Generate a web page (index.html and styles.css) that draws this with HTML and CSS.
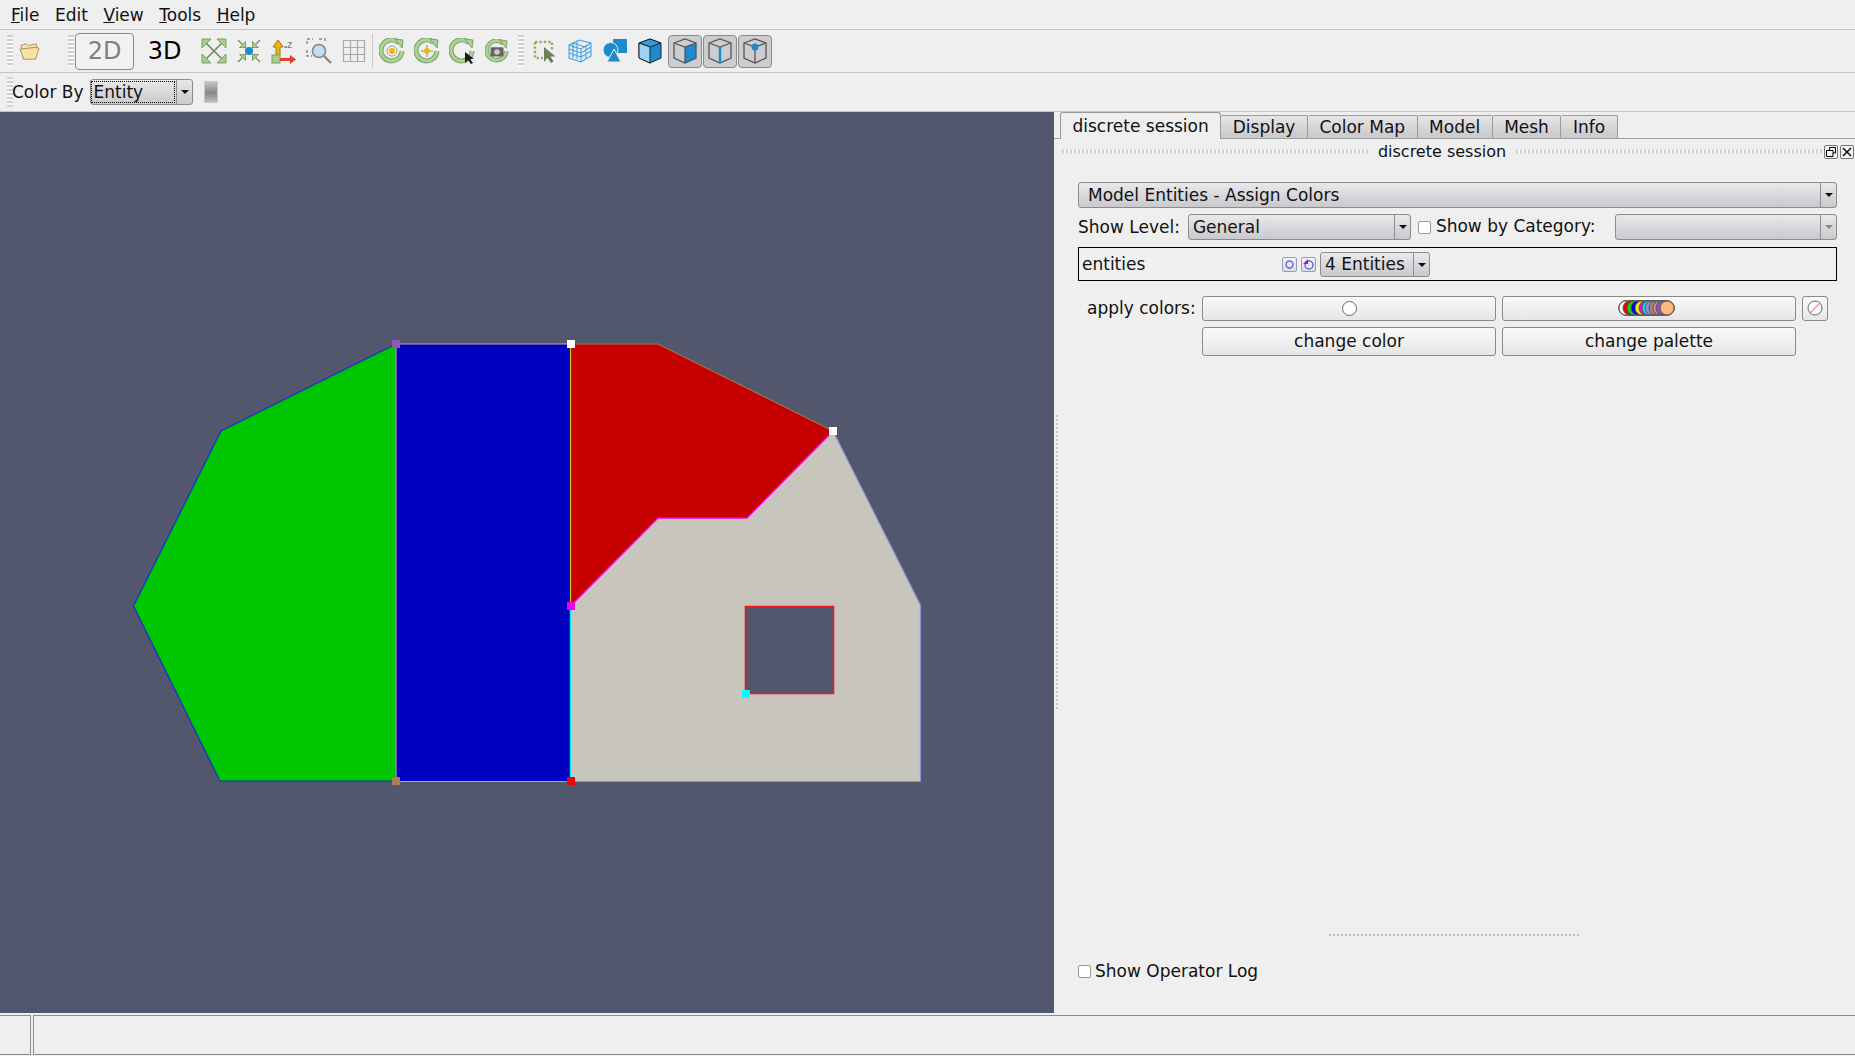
FILE: index.html
```html
<!DOCTYPE html>
<html>
<head>
    <meta charset="UTF-8">
    <meta name="viewport" content="width=device-width, initial-scale=1.0">
    <title>discrete session</title>
    <link rel="stylesheet" href="styles.css">
</head>
<body>
    <div id="menubar">
        <span><u>F</u>ile</span>
        <span>Edit</span>
        <span><u>V</u>iew</span>
        <span><u>T</u>ools</span>
        <span><u>H</u>elp</span>
    </div>

    <div id="toolbar">
        <div class="grip first"></div>
        <div class="tool open">
            <svg width="22" height="20" viewBox="0 0 24 22"><path d="M2 5l6-2 2 2 9-2 1 5L5 20z" fill="#f3dfb0" stroke="#a89468"/><path d="M1 9l17-2 4 1-4 12H5z" fill="#f6e3a8" stroke="#a08a58"/></svg>
        </div>
        <div class="grip second"></div>
        <button class="view-btn on">2D</button>
        <button class="view-btn">3D</button>
        <div class="tool">
            <svg width="26" height="26" viewBox="0 0 26 26"><path d="M4 4l18 18M22 4L4 22" stroke="#6d8a5c" stroke-width="1.6"/><path d="M1 1h9L1 10zM25 1h-9l9 9zM1 25h9L1 16zM25 25h-9l9-9z" fill="#a5cf8c" stroke="#7f9f6c"/></svg>
        </div>
        <div class="tool">
            <svg width="26" height="26" viewBox="0 0 26 26"><path d="M2 2l22 22M24 2L2 24" stroke="#6d8a5c" stroke-width="1.2"/><path d="M9.500 9.500H3.500l6-6zM16.500 9.500h6l-6-6zM9.500 16.500H3.500l6 6zM16.500 16.500h6l-6 6z" fill="#a5cf8c" stroke="#7f9f6c"/><circle cx="13" cy="13" r="4" fill="#1c8acc"/></svg>
        </div>
        <div class="tool">
            <svg width="26" height="26" viewBox="0 0 26 26"><path d="M7 2l5 7H9v9H5V9H2z" fill="#f2b705" stroke="#9a7a10"/><rect x="1" y="17" width="8" height="8" fill="#a5cf8c" stroke="#7f9f6c"/><path d="M9 20h10v-3l6 4.500-6 4.500v-3H9z" fill="#e0402c"/><path d="M13 9h3" stroke="#777" stroke-width="1.400"/><text x="16" y="10" class="axis-label">z</text></svg>
        </div>
        <div class="tool">
            <svg width="26" height="26" viewBox="0 0 26 26"><path d="M1 6V1h6M13 1h6v4M1 12v6h5" fill="none" stroke="#888" stroke-width="1.400" stroke-dasharray="3 2"/><circle cx="13" cy="13" r="6.500" fill="#bfe0f5" stroke="#888" stroke-width="1.600"/><path d="M18 18l7 7" stroke="#888" stroke-width="2.400"/></svg>
        </div>
        <div class="tool">
            <svg width="24" height="24" viewBox="0 0 24 24"><path d="M1.500 1.500h21v21h-21zM8.500 1.500v21M15.500 1.500v21M1.500 8.500h21M1.500 15.500h21" fill="none" stroke="#a8a8a8" stroke-width="1.200"/></svg>
        </div>
        <div class="divider"></div>
        <div class="tool">
            <svg width="26" height="26" viewBox="0 0 26 26"><path d="M20 5a10.500 10.500 0 1 0 3 8" fill="none" stroke="#7f9f6c" stroke-width="5"/><path d="M20 5a10.500 10.500 0 1 0 3 8" fill="none" stroke="#a9d492" stroke-width="3"/><path d="M16 1l8 1-1 8z" fill="#a9d492" stroke="#7f9f6c"/><circle cx="13" cy="13" r="5" fill="#f4f4f4" stroke="#999"/><circle cx="13" cy="13" r="3" fill="#f2b705"/></svg>
        </div>
        <div class="tool">
            <svg width="26" height="26" viewBox="0 0 26 26"><path d="M20 5a10.500 10.500 0 1 0 3 8" fill="none" stroke="#7f9f6c" stroke-width="5"/><path d="M20 5a10.500 10.500 0 1 0 3 8" fill="none" stroke="#a9d492" stroke-width="3"/><path d="M16 1l8 1-1 8z" fill="#a9d492" stroke="#7f9f6c"/><path d="M13 7v12M7 13h12" stroke="#888"/><circle cx="13" cy="13" r="3" fill="#f2b705"/></svg>
        </div>
        <div class="tool">
            <svg width="26" height="26" viewBox="0 0 26 26"><path d="M20 5a10.500 10.500 0 1 0 3 8" fill="none" stroke="#7f9f6c" stroke-width="5"/><path d="M20 5a10.500 10.500 0 1 0 3 8" fill="none" stroke="#a9d492" stroke-width="3"/><path d="M16 1l8 1-1 8z" fill="#a9d492" stroke="#7f9f6c"/><path d="M16 14v11l3-3 3 4 2-1-3-4h4z" fill="#1a1a1a"/></svg>
        </div>
        <div class="tool">
            <svg width="24" height="24" viewBox="0 0 26 26"><path d="M20 5a10.500 10.500 0 1 0 3 8" fill="none" stroke="#7f9f6c" stroke-width="5"/><path d="M20 5a10.500 10.500 0 1 0 3 8" fill="none" stroke="#a9d492" stroke-width="3"/><path d="M16 1l8 1-1 8z" fill="#a9d492" stroke="#7f9f6c"/><rect x="6" y="9" width="14" height="10" rx="1" fill="#666"/><circle cx="13" cy="14" r="3" fill="#ccc"/></svg>
        </div>
        <div class="grip third"></div>
        <div class="tool">
            <svg width="26" height="26" viewBox="0 0 26 26"><path d="M3 4h17v9M3 4v16h8" fill="none" stroke="#8cb35c" stroke-width="2.400" stroke-dasharray="2.400 2"/><path d="M12 9v15l3.500-4 3.500 5 2.500-1.500-3-5h5z" fill="#6f7f5c"/></svg>
        </div>
        <div class="tool">
            <svg width="26" height="26" viewBox="0 0 26 26"><path d="M2 7l10-5 12 3v13l-10 6-12-4zM2 7l12 4 10-6M14 11v13M2 11l12 4 10-6M2 15l12 4 10-6M6 5l12 4M6 5v15M10 3.500v17.500M19 7v14" fill="#d9eefb" stroke="#4f9fd8" stroke-width="1.100"/></svg>
        </div>
        <div class="tool">
            <svg width="26" height="26" viewBox="0 0 26 26"><rect x="11" y="1" width="14" height="14" fill="#1c8acc"/><circle cx="8.500" cy="12" r="7.500" fill="#1c8acc" stroke="#eee"/><path d="M12 11l7 13H5z" fill="#1c8acc" stroke="#eee"/></svg>
        </div>
        <div class="tool">
            <svg width="24" height="26" viewBox="0 0 24 26"><path d="M1 5l11-4 11 4v15l-11 5-11-5z" fill="#1c8acc" stroke="#223"/><path d="M1 5l11 4 11-4-11-4z" fill="#2f9ede" stroke="#223"/><path d="M1 5l11 4v16L1 20z" fill="#9dd3f2" stroke="#223"/></svg>
        </div>
        <button class="cube-btn">
            <svg width="24" height="26" viewBox="0 0 24 26"><path d="M12 9l11-4v15l-11 5z" fill="#1c8acc"/><path d="M1 5l11-4 11 4v15l-11 5-11-5zM1 5l11 4 11-4M12 9v16" fill="none" stroke="#555" stroke-width="1.300"/></svg>
        </button>
        <button class="cube-btn">
            <svg width="24" height="26" viewBox="0 0 24 26"><path d="M1 5l11-4 11 4v15l-11 5-11-5zM1 5l11 4 11-4M12 9v16" fill="none" stroke="#555" stroke-width="1.300"/><path d="M12 9v16" stroke="#1c8acc" stroke-width="2.400"/></svg>
        </button>
        <button class="cube-btn">
            <svg width="24" height="26" viewBox="0 0 24 26"><path d="M1 5l11-4 11 4v15l-11 5-11-5zM1 5l11 4 11-4M12 9v16" fill="none" stroke="#555" stroke-width="1.300"/><circle cx="12" cy="9" r="3.500" fill="#1c8acc"/></svg>
        </button>
    </div>

    <div id="colorbar">
        <div class="grip first"></div>
        <span class="colorby-label">Color By</span>
        <div class="combo focus"><span class="combo-text"><i>Entity</i></span><span class="arrow"></span></div>
        <div class="swatch"></div>
    </div>

    <div id="main">
        <div id="canvas">
            <svg width="1054" height="902" viewBox="0 112 1054 902">
                <polygon points="396,344 221,431 133.500,606 220,781 396,781" fill="#00c600" stroke="#1030d0" stroke-width="1.200"/>
                <polygon points="396,344 570.500,344 570.500,781 396,781" fill="#0000c0"/>
                <polygon points="570.500,344 658,344 833,431 747,518 658,518 570.500,606" fill="#c60000"/>
                <path fill-rule="evenodd" d="M570.500 606L658 518H747L833 431L920.500 605V781.500H570.500ZM745.500 606.500V693.500H833.500V606.500Z" fill="#c8c5bd"/>
                <path d="M745.500 606.500H833.500V693.500H745.500Z" fill="none" stroke="#f01818" stroke-width="1.600"/>
                <path d="M396 344V781" stroke="#c8a0c8" stroke-width="1.200"/>
                <path d="M396 344H570.500" stroke="#c8a8a8" stroke-width="1.200"/>
                <path d="M396 781.500H570.500" stroke="#a8a8e0" stroke-width="1.200"/>
                <path d="M570.500 344V606" stroke="#d8c400" stroke-width="1.200"/>
                <path d="M570.500 606V781" stroke="#00f0f0" stroke-width="1.500"/>
                <path d="M570.500 344H658L833 431" fill="none" stroke="#a87050" stroke-width="1.200"/>
                <path d="M570.500 606L658 518H747L833 431" fill="none" stroke="#f000f0" stroke-width="1.300"/>
                <path d="M833 431L920.500 605V781.500H570.500" fill="none" stroke="#8c8cdc" stroke-width="1.200"/>
                <rect x="392" y="340" width="8" height="8" fill="#8a5cb0"/>
                <rect x="392" y="777" width="8" height="8" fill="#a88050"/>
                <rect x="567" y="340" width="8" height="8" fill="#fff"/>
                <rect x="829" y="427" width="8" height="8" fill="#fff"/>
                <rect x="567" y="602" width="8" height="8" fill="#f000f0"/>
                <rect x="567" y="777" width="8" height="8" fill="#f00000"/>
                <rect x="742" y="690" width="8" height="8" fill="#00ffff"/>
            </svg>
        </div>

        <div id="dock">
            <div class="splitter"></div>
            <div class="tabs">
                <div class="tab active">discrete session</div>
                <div class="tab">Display</div>
                <div class="tab">Color Map</div>
                <div class="tab">Model</div>
                <div class="tab">Mesh</div>
                <div class="tab">Info</div>
            </div>
            <div class="dock-title">
                <div class="title-grip"></div>
                <span>discrete session</span>
                <div class="title-grip"></div>
                <div class="title-btn"><svg width="10" height="10" viewBox="0 0 10 10"><path d="M3.500 3V.5h6v5.500H7M.5 3.500h6.500v6H.5z" fill="none" stroke="#000"/></svg></div>
                <div class="title-btn"><svg width="10" height="10" viewBox="0 0 10 10"><path d="M1 1l8 8M9 1l-8 8" stroke="#000" stroke-width="1.400"/></svg></div>
            </div>

            <div class="panel">
                <div class="combo op-combo"><span class="combo-text">Model Entities - Assign Colors</span><span class="arrow"></span></div>

                <div class="level-row">
                    <span>Show Level:</span>
                    <div class="combo level-combo"><span class="combo-text">General</span><span class="arrow"></span></div>
                    <span class="check"></span>
                    <span class="category-label">Show by Category:</span>
                    <div class="combo category-combo disabled"><span class="combo-text"></span><span class="arrow"></span></div>
                </div>

                <div class="entity-box">
                    <span class="entity-name">entities</span>
                    <span class="mini-btn"><svg width="11" height="11" viewBox="0 0 11 11"><circle cx="5.500" cy="5.500" r="3.500" fill="#e8e8ff" stroke="#5a6ad0" stroke-width="1.400"/></svg></span>
                    <span class="mini-btn"><svg width="11" height="11" viewBox="0 0 11 11"><circle cx="6" cy="6" r="4" fill="#e8e8ff" stroke="#5a6ad0" stroke-width="1.400"/><path d="M0 5l5-5v5z" fill="#c000e0"/></svg></span>
                    <div class="combo entity-combo"><span class="combo-text">4 Entities</span><span class="arrow"></span></div>
                </div>

                <div class="color-grid">
                    <span class="apply-label">apply colors:</span>
                    <button class="btn short"><span class="dot"></span></button>
                    <button class="btn short">
                        <svg class="palette" width="58" height="16" viewBox="0 0 58 16">
                            <rect x="0.500" y="0.500" width="56" height="15" rx="7.500" fill="#fff" stroke="#666"/>
                            <circle cx="8" cy="8" r="7" fill="#fff" stroke="#555"/>
                            <circle cx="12" cy="8" r="7" fill="#f00000" stroke="#555"/>
                            <circle cx="16" cy="8" r="7" fill="#00e000" stroke="#555"/>
                            <circle cx="20" cy="8" r="7" fill="#0000f0" stroke="#555"/>
                            <circle cx="24" cy="8" r="7" fill="#f0f000" stroke="#555"/>
                            <circle cx="28" cy="8" r="7" fill="#f000f0" stroke="#555"/>
                            <circle cx="31" cy="8" r="7" fill="#00f0f0" stroke="#555"/>
                            <circle cx="34" cy="8" r="7" fill="#8a90e0" stroke="#555"/>
                            <circle cx="38" cy="8" r="7" fill="#a88868" stroke="#555"/>
                            <circle cx="42" cy="8" r="7" fill="#e880b0" stroke="#555"/>
                            <circle cx="45" cy="8" r="7" fill="#8a5cb0" stroke="#555"/>
                            <circle cx="49" cy="8" r="7" fill="#fdb97d" stroke="#555"/>
                        </svg>
                    </button>
                    <button class="btn short">
                        <svg width="16" height="16" viewBox="0 0 16 16"><circle cx="8" cy="8" r="7" fill="#fff" stroke="#666"/><path d="M3.500 12.500l9-9" stroke="#f09090" stroke-width="1.200"/></svg>
                    </button>
                    <span></span>
                    <button class="btn tall">change color</button>
                    <button class="btn tall">change palette</button>
                </div>
            </div>

            <div class="bottom-grip"></div>
            <label class="log-row"><span class="check"></span>Show Operator Log</label>
        </div>
    </div>

    <div id="statusbar">
        <div class="status-cell small"></div>
        <div class="status-cell"></div>
    </div>
</body>
</html>
```

FILE: styles.css
```css
* {
    box-sizing: border-box;
}
html, body {
    margin: 0;
    height: 100%;
    overflow: hidden;
}
body {
    display: flex;
    flex-direction: column;
    background-color: #efefef;
    color: #111;
    font-family: "DejaVu Sans", sans-serif;
    font-size: 17px;
}
button {
    font: inherit;
    color: inherit;
    padding: 0;
}
svg {
    display: block;
}

#menubar {
    display: flex;
    height: 30px;
    padding: 3px 0 0 11px;
    border-bottom: 1px solid #c4c4c4;
}
#menubar span {
    margin-right: 15.500px;
    line-height: 24px;
}

#toolbar {
    display: flex;
    align-items: center;
    height: 43px;
    border-bottom: 1px solid #c4c4c4;
}
.grip {
    width: 6px;
    height: 32px;
    background: repeating-linear-gradient(#cfcfcf 0 2px, #f8f8f8 2px 4px);
}
.grip.first { margin-left: 7px; }
.grip.second { margin-left: 21px; margin-right: 1px; }
.grip.third { margin: 0 3px 0 4px; }
.tool {
    display: flex;
    flex: none;
    align-items: center;
    justify-content: center;
    width: 35px;
    height: 35px;
}
.open { width: 34px; }
.axis-label {
    font-size: 10px;
    font-family: "DejaVu Sans", sans-serif;
    fill: #777;
}
.divider {
    width: 1px;
    height: 34px;
    margin: 0 1px 0 1px;
    background: #c8c8c8;
}
.view-btn {
    width: 59px;
    height: 37px;
    background: none;
    border: 1px solid transparent;
    border-radius: 4px;
    font-size: 24px;
    color: #000;
}
.view-btn.on {
    color: #808080;
    border-color: #8a8a8a;
    background: #f2f2f2;
}
.view-btn + .view-btn { margin-left: 1px; margin-right: 2px; }
.cube-btn {
    display: flex;
    align-items: center;
    justify-content: center;
    width: 34px;
    height: 33px;
    margin-right: 1px;
    background: #cdcdd1;
    border: 1px solid #8a8a8a;
    border-radius: 4px;
}
.tool + .cube-btn { margin-left: 1px; }

#colorbar {
    display: flex;
    align-items: center;
    height: 39px;
    border-bottom: 1px solid #c4c4c4;
}
#colorbar .grip { height: 30px; }
.colorby-label { margin: 0 6px 0 -1px; }

.combo {
    display: flex;
    flex: none;
    height: 26px;
    background: linear-gradient(#e9e9eb, #c9c9ce);
    border: 1px solid #8c8c8c;
    border-radius: 3px;
}
.combo-text {
    flex: 1;
    padding-left: 4px;
    line-height: 24px;
}
.arrow {
    position: relative;
    flex: none;
    width: 16px;
    border-left: 1px solid #8c8c8c;
}
.arrow::after {
    content: "";
    position: absolute;
    top: 10px;
    left: 4px;
    border: 4px solid transparent;
    border-top: 4px solid #111;
    border-bottom: 0;
}
.focus {
    width: 103px;
}
.focus i {
    display: block;
    height: 20px;
    margin: 2px 0 0 -2px;
    padding-left: 2px;
    font-style: normal;
    line-height: 20px;
    outline: 1px dotted #000;
}
.focus .combo-text { padding: 0 2px 0 3px; }
.swatch {
    width: 14px;
    height: 22px;
    margin-left: 11px;
    background: linear-gradient(#c4c4c4, #888 55%, #bdbdbd);
    border: 1px solid #c9c9c9;
}

#main {
    display: flex;
    flex: 1;
    min-height: 0;
}
#canvas {
    flex: none;
    width: 1054px;
    background-color: #52576e;
}

#dock {
    position: relative;
    display: flex;
    flex: 1;
    flex-direction: column;
    min-width: 0;
}
.splitter {
    position: absolute;
    top: 303px;
    left: 2px;
    width: 2px;
    height: 295px;
    background: repeating-linear-gradient(#c4c4c4 0 2px, transparent 2px 4px);
}
.tabs {
    display: flex;
    align-items: flex-end;
    height: 27px;
    padding-left: 6px;
    border-bottom: 1px solid #a0a0a0;
}
.tab {
    height: 23px;
    padding: 0 11.500px;
    line-height: 22px;
    white-space: nowrap;
    background: linear-gradient(#e6e6e8, #c8c8cd);
    border: 1px solid #9a9a9a;
    border-left: 0;
    border-bottom: 0;
    border-radius: 2px 2px 0 0;
}
.tab.active {
    position: relative;
    height: 27px;
    margin-bottom: -1px;
    line-height: 26px;
    background: #efefef;
    border-left: 1px solid #9a9a9a;
    border-radius: 3px 3px 0 0;
}
.dock-title {
    display: flex;
    align-items: center;
    gap: 10px;
    height: 25px;
    padding: 0 1px 0 8px;
    font-size: 16px;
}
.title-grip {
    flex: 1;
    height: 5px;
    background: repeating-linear-gradient(90deg, #d4d4d4 0 2px, #f6f6f6 2px 4px);
}
.title-btn {
    display: flex;
    align-items: center;
    justify-content: center;
    width: 14px;
    height: 14px;
    margin-left: -8px;
    background: #f4f4f4;
    border: 1px solid #777;
    border-radius: 2px;
}
.title-btn:first-of-type { margin-left: -2px; }

.panel {
    display: flex;
    flex-direction: column;
    padding: 18px 18px 0 24px;
}
.op-combo {
    height: 26px;
}
.op-combo .combo-text { padding-left: 9px; }
.level-row {
    display: flex;
    align-items: center;
    height: 26px;
    margin-top: 6px;
}
.level-combo {
    width: 223px;
    margin: 0 7px 0 8px;
}
.category-label { padding-bottom: 2px; }
.check {
    flex: none;
    width: 13px;
    height: 13px;
    margin-right: 5px;
    background: #fff;
    border: 1px solid #999;
    border-radius: 2px;
}
.category-combo {
    width: 222px;
    margin-left: auto;
}
.disabled .arrow::after {
    border-top-color: #888;
}
.entity-box {
    display: flex;
    align-items: center;
    height: 34px;
    margin-top: 7px;
    padding-left: 3px;
    background: #f0f0f0;
    border: 1px solid #000;
}
.entity-name {
    width: 200px;
}
.mini-btn {
    display: flex;
    align-items: center;
    justify-content: center;
    width: 15px;
    height: 15px;
    margin-right: 4px;
    background: linear-gradient(#f4f4f8, #dcdce4);
    border: 1px solid #9a9ab0;
    border-radius: 2px;
}
.entity-combo {
    width: 110px;
    height: 25px;
}
.entity-combo .combo-text { line-height: 23px; }

.color-grid {
    display: grid;
    grid-template-columns: 118px 294px 294px 26px;
    column-gap: 6px;
    row-gap: 6px;
    align-items: center;
    margin-top: 15px;
}
.apply-label {
    padding: 0 0 2px 9px;
    white-space: nowrap;
}
.btn {
    display: flex;
    align-items: center;
    justify-content: center;
    background: linear-gradient(#fafafa, #e6e6e6);
    border: 1px solid #8a8a8a;
    border-radius: 3px;
}
.short { height: 25px; padding-bottom: 1px; }
.tall { height: 29px; padding-bottom: 2px; }
.palette { margin-right: 4px; }
.dot {
    width: 15px;
    height: 15px;
    background: #fff;
    border: 1px solid #666;
    border-radius: 50%;
}
.bottom-grip {
    align-self: center;
    width: 252px;
    height: 2px;
    margin-top: auto;
    background: repeating-linear-gradient(90deg, #bcbcbc 0 2px, transparent 2px 4px);
}
.log-row {
    display: flex;
    align-items: center;
    height: 24px;
    margin: 23px 0 30px 24px;
}
.log-row .check { margin-right: 4px; }

#statusbar {
    display: flex;
    gap: 2px;
    height: 41px;
    flex: none;
    margin-top: 2px;
}
.status-cell {
    flex: 1;
    height: 40px;
    border-top: 1px solid #8c8c8c;
    border-bottom: 1px solid #8c8c8c;
    border-left: 1px solid #8c8c8c;
}
.status-cell.small {
    flex: none;
    width: 31px;
    border-left: 0;
    border-right: 1px solid #8c8c8c;
}
```
